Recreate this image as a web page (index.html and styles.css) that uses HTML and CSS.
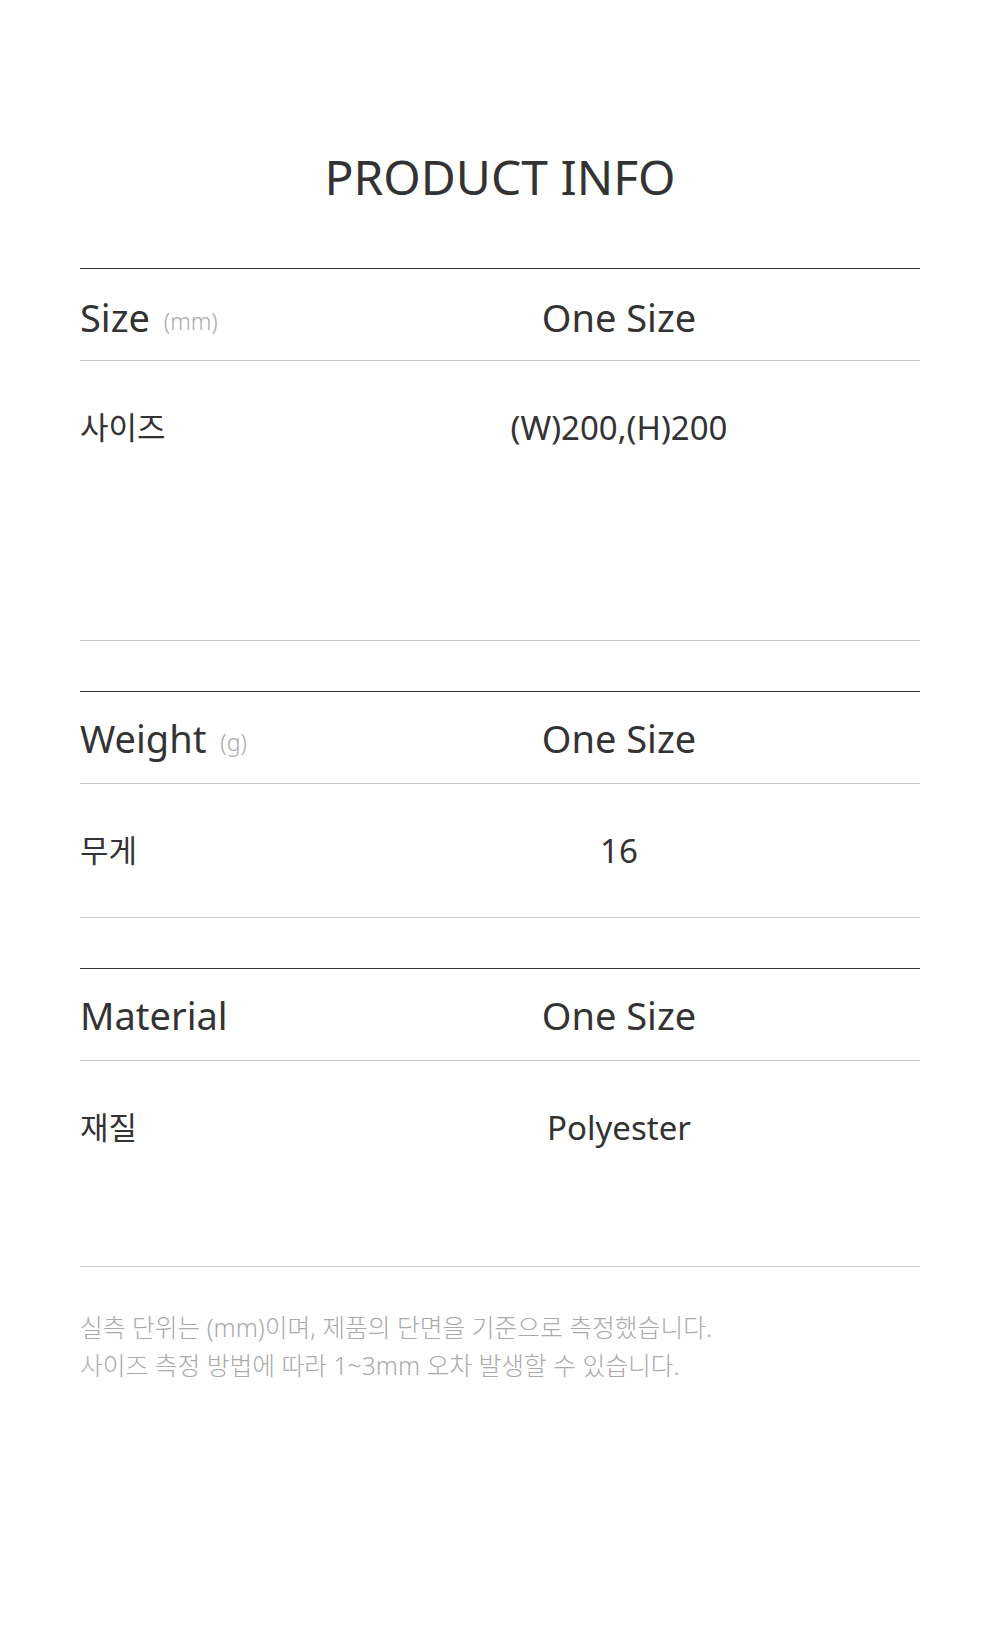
FILE: index.html
```html
<!DOCTYPE html>
<html lang="ko">
<head>
<meta charset="utf-8">
<link rel="stylesheet" href="styles.css">
</head>
<body>
<div class="page">
  <h1 class="title">PRODUCT INFO</h1>

  <section class="spec">
    <div class="row head head-first">
      <div class="label">Size <span class="unit">(mm)</span></div>
      <div class="value">One Size</div>
    </div>
    <div class="row body body-size">
      <div class="label">사이즈</div>
      <div class="value">(W)200,(H)200</div>
    </div>
  </section>

  <section class="spec">
    <div class="row head">
      <div class="label">Weight <span class="unit">(g)</span></div>
      <div class="value">One Size</div>
    </div>
    <div class="row body">
      <div class="label">무게</div>
      <div class="value">16</div>
    </div>
  </section>

  <section class="spec spec-last">
    <div class="row head">
      <div class="label">Material</div>
      <div class="value">One Size</div>
    </div>
    <div class="row body body-material">
      <div class="label">재질</div>
      <div class="value">Polyester</div>
    </div>
  </section>

  <p class="note">실측 단위는 (mm)이며, 제품의 단면을 기준으로 측정했습니다.<br>사이즈 측정 방법에 따라 1~3mm 오차 발생할 수 있습니다.</p>
</div>
</body>
</html>
```

FILE: styles.css
```css
html, body {
  margin: 0;
  padding: 0;
  background: #fff;
}
body {
  font-family: "Noto Sans", "Noto Sans CJK KR", sans-serif;
  color: #333;
}
.page {
  width: 840px;
  margin: 0 auto;
  padding-top: 147px;
  padding-bottom: 200px;
}
.title {
  margin: 0 0 61px;
  font-size: 48px;
  line-height: 60px;
  font-weight: 400;
  text-align: center;
  color: #333;
}
.spec {
  border-top: 1px solid #333;
  margin-bottom: 50px;
}
.spec-last {
  margin-bottom: 0;
}
.row {
  display: grid;
  grid-template-columns: 238px 1fr;
  border-bottom: 1px solid #c4c4c4;
}
.head {
  height: 91px;
  align-items: center;
  font-size: 38px;
}
.head .label, .head .value {
  line-height: 40px;
  padding-top: 1px;
}
.head-first .label, .head-first .value {
  padding-top: 4px;
}
.unit {
  font-size: 23px;
  line-height: 1;
  font-weight: 300;
  color: #aaa;
  margin-left: 4px;
  vertical-align: 2px;
}
.body {
  padding: 50px 0;
  align-items: start;
  line-height: 33px;
}
.body .label {
  font-size: 31px;
}
.body .value {
  font-size: 33px;
}
.body-size {
  min-height: 280px;
  box-sizing: border-box;
}
.body-material {
  min-height: 206px;
  box-sizing: border-box;
}
.value {
  text-align: center;
}
.note {
  margin: 42px 0 0;
  font-size: 24.75px;
  line-height: 38px;
  font-weight: 300;
  color: #aaa;
}
```
